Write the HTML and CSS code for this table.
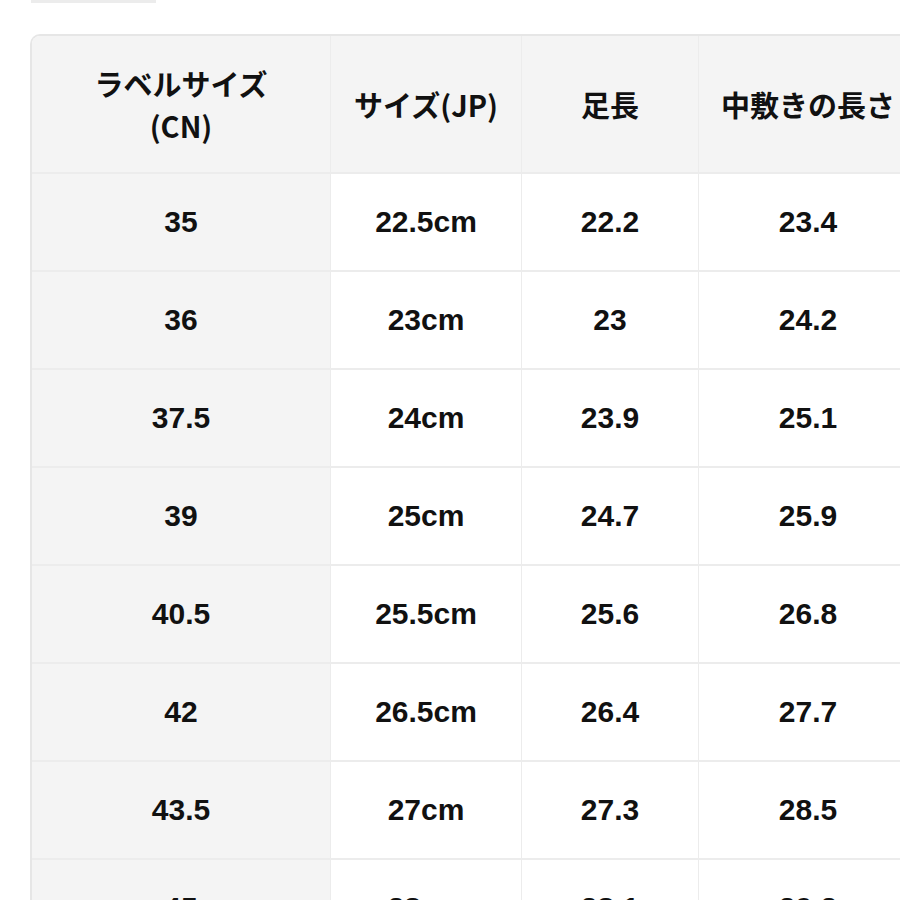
FILE: index.html
```html
<!DOCTYPE html>
<html lang="ja">
<head>
<meta charset="utf-8">
<link rel="stylesheet" href="styles.css">
</head>
<body>
<div class="page">
  <div class="crop-text"></div>
  <table class="size-table">
    <colgroup>
      <col class="c1"><col class="c2"><col class="c3"><col class="c4">
    </colgroup>
    <thead>
      <tr>
        <th class="first">ラベルサイズ<br>(CN)</th>
        <th>サイズ(JP)</th>
        <th>足長</th>
        <th>中敷きの長さ</th>
      </tr>
    </thead>
    <tbody>
      <tr><td class="label">35</td><td>22.5cm</td><td>22.2</td><td>23.4</td></tr>
      <tr><td class="label">36</td><td>23cm</td><td>23</td><td>24.2</td></tr>
      <tr><td class="label">37.5</td><td>24cm</td><td>23.9</td><td>25.1</td></tr>
      <tr><td class="label">39</td><td>25cm</td><td>24.7</td><td>25.9</td></tr>
      <tr><td class="label">40.5</td><td>25.5cm</td><td>25.6</td><td>26.8</td></tr>
      <tr><td class="label">42</td><td>26.5cm</td><td>26.4</td><td>27.7</td></tr>
      <tr><td class="label">43.5</td><td>27cm</td><td>27.3</td><td>28.5</td></tr>
      <tr><td class="label">45</td><td>28cm</td><td>28.1</td><td>29.2</td></tr>
    </tbody>
  </table>
</div>
</body>
</html>
```
FILE: styles.css
```css
html, body {
  margin: 0;
  padding: 0;
  background: #ffffff;
  overflow: hidden;
  width: 900px;
  height: 900px;
}
.page {
  position: relative;
  width: 900px;
  height: 900px;
  overflow: hidden;
  font-family: "Liberation Sans", "Noto Sans CJK JP", sans-serif;
  color: #111111;
}
.crop-text {
  width: 125px;
  height: 3px;
  margin-left: 31px;
  background: #ececec;
}
.size-table {
  margin-top: 31px;
  margin-left: 30px;
  width: 888px;
  table-layout: fixed;
  border-collapse: separate;
  border-spacing: 0;
  border-top: 2px solid #e6e6e6;
  border-left: 2px solid #e6e6e6;
  border-top-left-radius: 10px;
}
.c1 { width: 299px; }
.c2 { width: 191px; }
.c3 { width: 177px; }
.c4 { width: 219px; }
th, td {
  text-align: center;
  vertical-align: middle;
  font-weight: bold;
  border-right: 1px solid #ececec;
  border-bottom: 2px solid #ececec;
  padding: 0;
}
th {
  height: 136px;
  background: #f4f4f4;
  font-size: 29px;
  line-height: 42px;
  font-family: "Noto Sans CJK JP", "Liberation Sans", sans-serif;
  font-weight: 700;
}
th.first {
  border-top-left-radius: 8px;
}
td {
  height: 96px;
  font-size: 30px;
  background: #ffffff;
}
td.label {
  background: #f4f4f4;
}
```
